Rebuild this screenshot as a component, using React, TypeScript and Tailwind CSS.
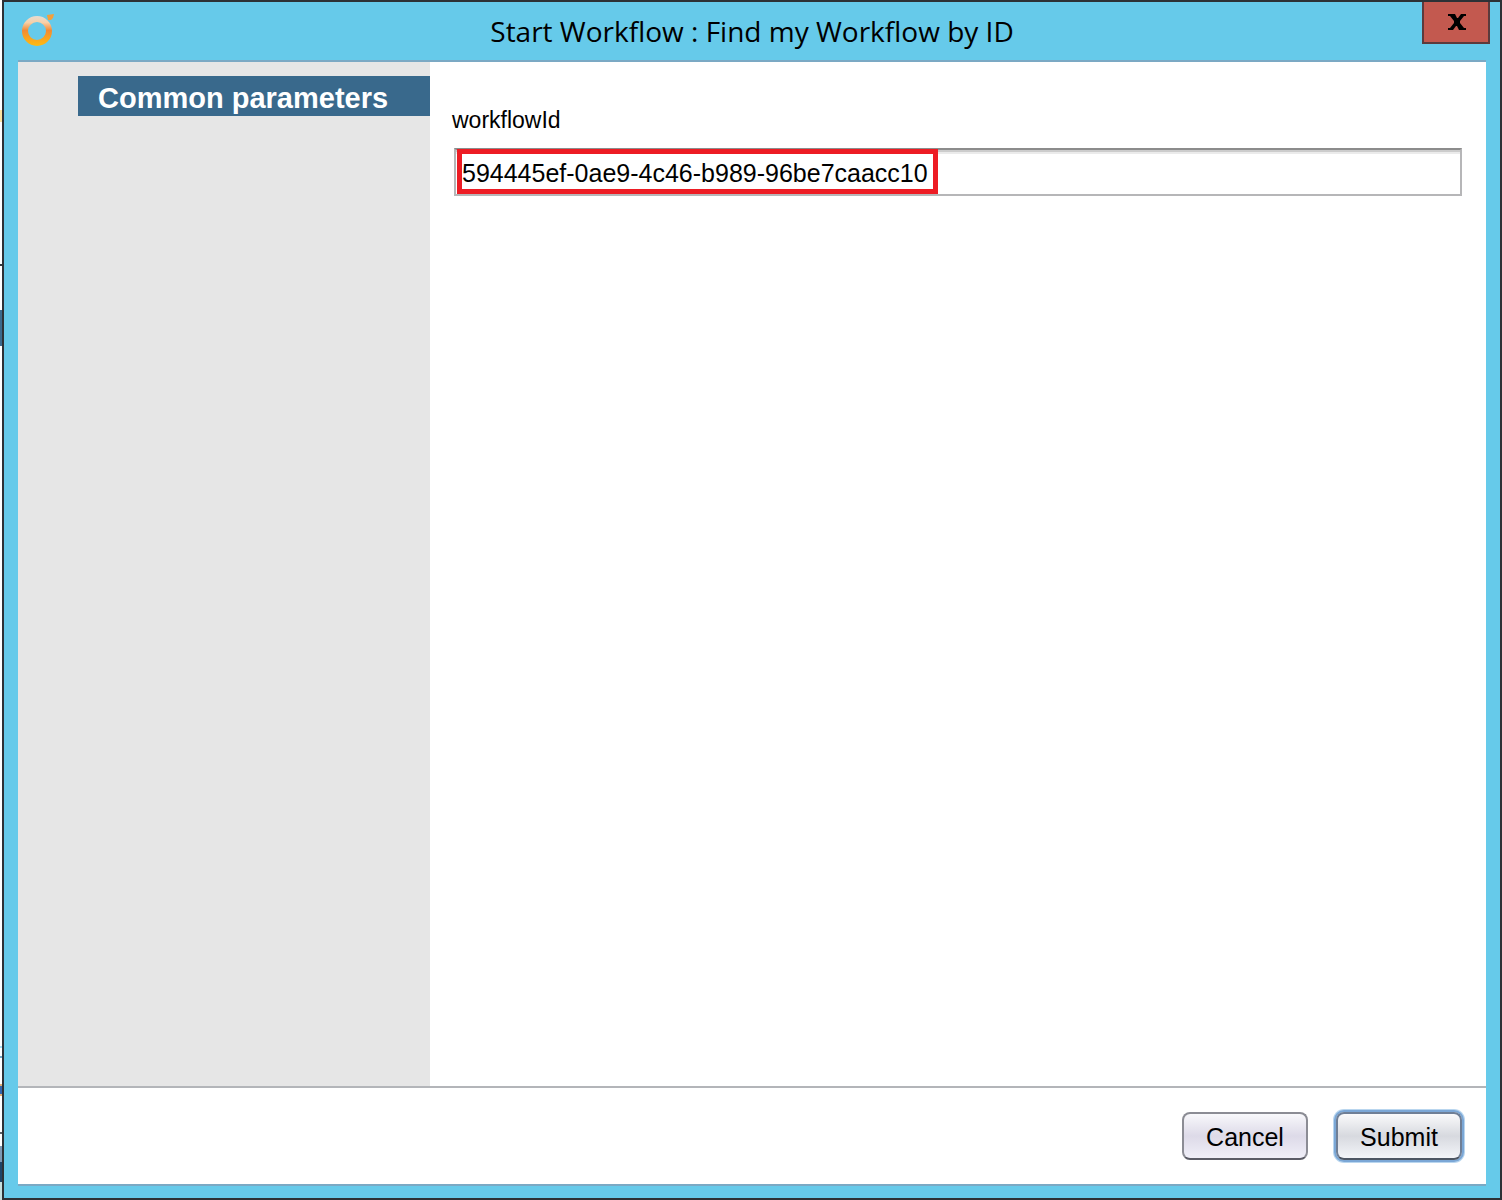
import React, { useState } from "react";

const DesktopEdge = () => (
  <div className="flex w-[2px] shrink-0 flex-col bg-white">
    <div className="h-[110px]" />
    <div className="h-3 bg-[#fbe3a0]" />
    <div className="h-[142px]" />
    <div className="h-[2px] bg-[#33393d]" />
    <div className="h-11" />
    <div className="h-9 bg-[#3b698c]" />
    <div className="grow" />
    <div className="h-[2px] bg-[#a9dff5]" />
    <div className="h-2" />
    <div className="h-[2px] bg-[#74a9c9]" />
    <div className="h-[26px]" />
    <div className="h-[2px] bg-[#e0b074]" />
    <div className="h-2 bg-[#3466ad]" />
    <div className="h-[2px] bg-[#e0b074]" />
    <div className="h-9" />
    <div className="h-[2px] bg-[#5b6066]" />
    <div className="h-3" />
    <div className="h-4 bg-[#7d99b5]" />
    <div className="h-5 bg-[#1f4468]" />
    <div className="h-[18px] bg-[#c6dedd]" />
  </div>
);

const RingLogo = () => (
  <svg width="36" height="36" viewBox="0 0 36 36" aria-hidden="true">
    <defs>
      <linearGradient id="ring" x1="0" y1="0" x2="0" y2="1">
        <stop offset="0" stopColor="#e6dcd2" />
        <stop offset="0.22" stopColor="#f8d0a8" />
        <stop offset="0.48" stopColor="#f28a34" />
        <stop offset="0.75" stopColor="#f9a51e" />
        <stop offset="1" stopColor="#fdbb12" />
      </linearGradient>
    </defs>
    <path
      fill="url(#ring)"
      fillRule="evenodd"
      d="M17 4a15 15 0 1 1 0 30a15 15 0 1 1 0-30zM17 10a9 9 0 1 0 0 18a9 9 0 1 0 0-18z"
    />
    <path fill="#f3a03c" d="M27 3l7-1l-1 4l-2 2h-3z" />
  </svg>
);

const CloseIcon = () => (
  <svg width="18" height="16" viewBox="0 0 18 16" aria-hidden="true">
    <path
      fill="#000"
      d="M0 0h7l2 4h1l3-4h5v2h-2l-4 5v2l4 5h2v2h-7l-2-4H8l-3 4H0v-2h2l4-5V7L2 2H0z"
    />
  </svg>
);

const App: React.FC = () => {
  const [workflowId, setWorkflowId] = useState(
    "594445ef-0ae9-4c46-b989-96be7caacc10"
  );

  return (
    <div className="flex min-h-screen font-['Liberation_Sans',sans-serif] text-black">
      <DesktopEdge />
      <section
        role="dialog"
        aria-labelledby="dialog-title"
        className="flex grow flex-col border-2 border-[#2d3136] bg-[#66caea] px-3.5 pb-3"
      >
        <header className="grid h-[58px] grid-cols-[1fr_auto_1fr] items-start">
          <div className="pt-2.5 pl-[2px]">
            <RingLogo />
          </div>
          <h1
            id="dialog-title"
            className="pt-2 font-['Open_Sans',sans-serif] text-[28px] leading-[42px]"
          >
            Start Workflow : Find my Workflow by ID
          </h1>
          <button
            type="button"
            aria-label="Close"
            className="-mr-1 flex h-[42px] w-[68px] items-center justify-center justify-self-end border-2 border-t-0 border-[#5c3a3c] bg-[#c3594f] pl-[2px]"
          >
            <CloseIcon />
          </button>
        </header>

        <form
          className="flex grow flex-col border-y-2 border-[#7ba9c4] bg-white"
          onSubmit={(e) => e.preventDefault()}
        >
          <div className="flex grow">
            <nav className="w-[412px] shrink-0 bg-[#e6e6e6] pt-3.5 pl-[60px]">
              <a
                href="#common"
                className="block h-10 bg-[#39698c] pl-5 text-[29px] leading-[44px] font-bold text-white"
              >
                Common parameters
              </a>
            </nav>

            <div id="common" className="grow pt-11 pr-6 pl-[22px]">
              <label htmlFor="workflowId" className="block text-[23px] leading-7">
                workflowId
              </label>
              <div className="relative mt-3.5 ml-[2px]">
                <input
                  id="workflowId"
                  type="text"
                  value={workflowId}
                  onChange={(e) => setWorkflowId(e.target.value)}
                  className="block h-12 w-full border-2 border-[#b6b6b8] border-t-[#8c8c8c] bg-white px-1.5 pt-[2px] text-[25px] leading-8 shadow-[inset_0_2px_0_#cccccc,inset_0_4px_0_#ebebeb] outline-none"
                />
                <div className="pointer-events-none absolute top-[1px] left-[3px] h-[45px] w-[481px] border-[5px] border-[#ed1c24]" />
              </div>
            </div>
          </div>

          <footer className="flex h-[98px] justify-end gap-7 border-t-2 border-[#b3b5b9] pt-6 pr-6">
            <button
              type="button"
              className="h-12 w-[126px] rounded-lg border-2 border-[#8b8c94] border-b-[#5b5c66] bg-linear-to-b from-[#f8f8fb] via-[#dddae8] to-[#f0eff8] pt-1 text-[25px]"
            >
              Cancel
            </button>
            <button
              type="submit"
              className="h-12 w-[126px] rounded-lg border-2 border-[#6f7f96] border-b-[#4d5663] bg-linear-to-b from-[#fafafb] via-[#d7d9df] to-[#f3f5f9] pt-1 text-[25px] shadow-[0_0_0_2px_#7ba7d6,0_0_0_3px_#b9d6ef]"
            >
              Submit
            </button>
          </footer>
        </form>
      </section>
    </div>
  );
};

export default App;
